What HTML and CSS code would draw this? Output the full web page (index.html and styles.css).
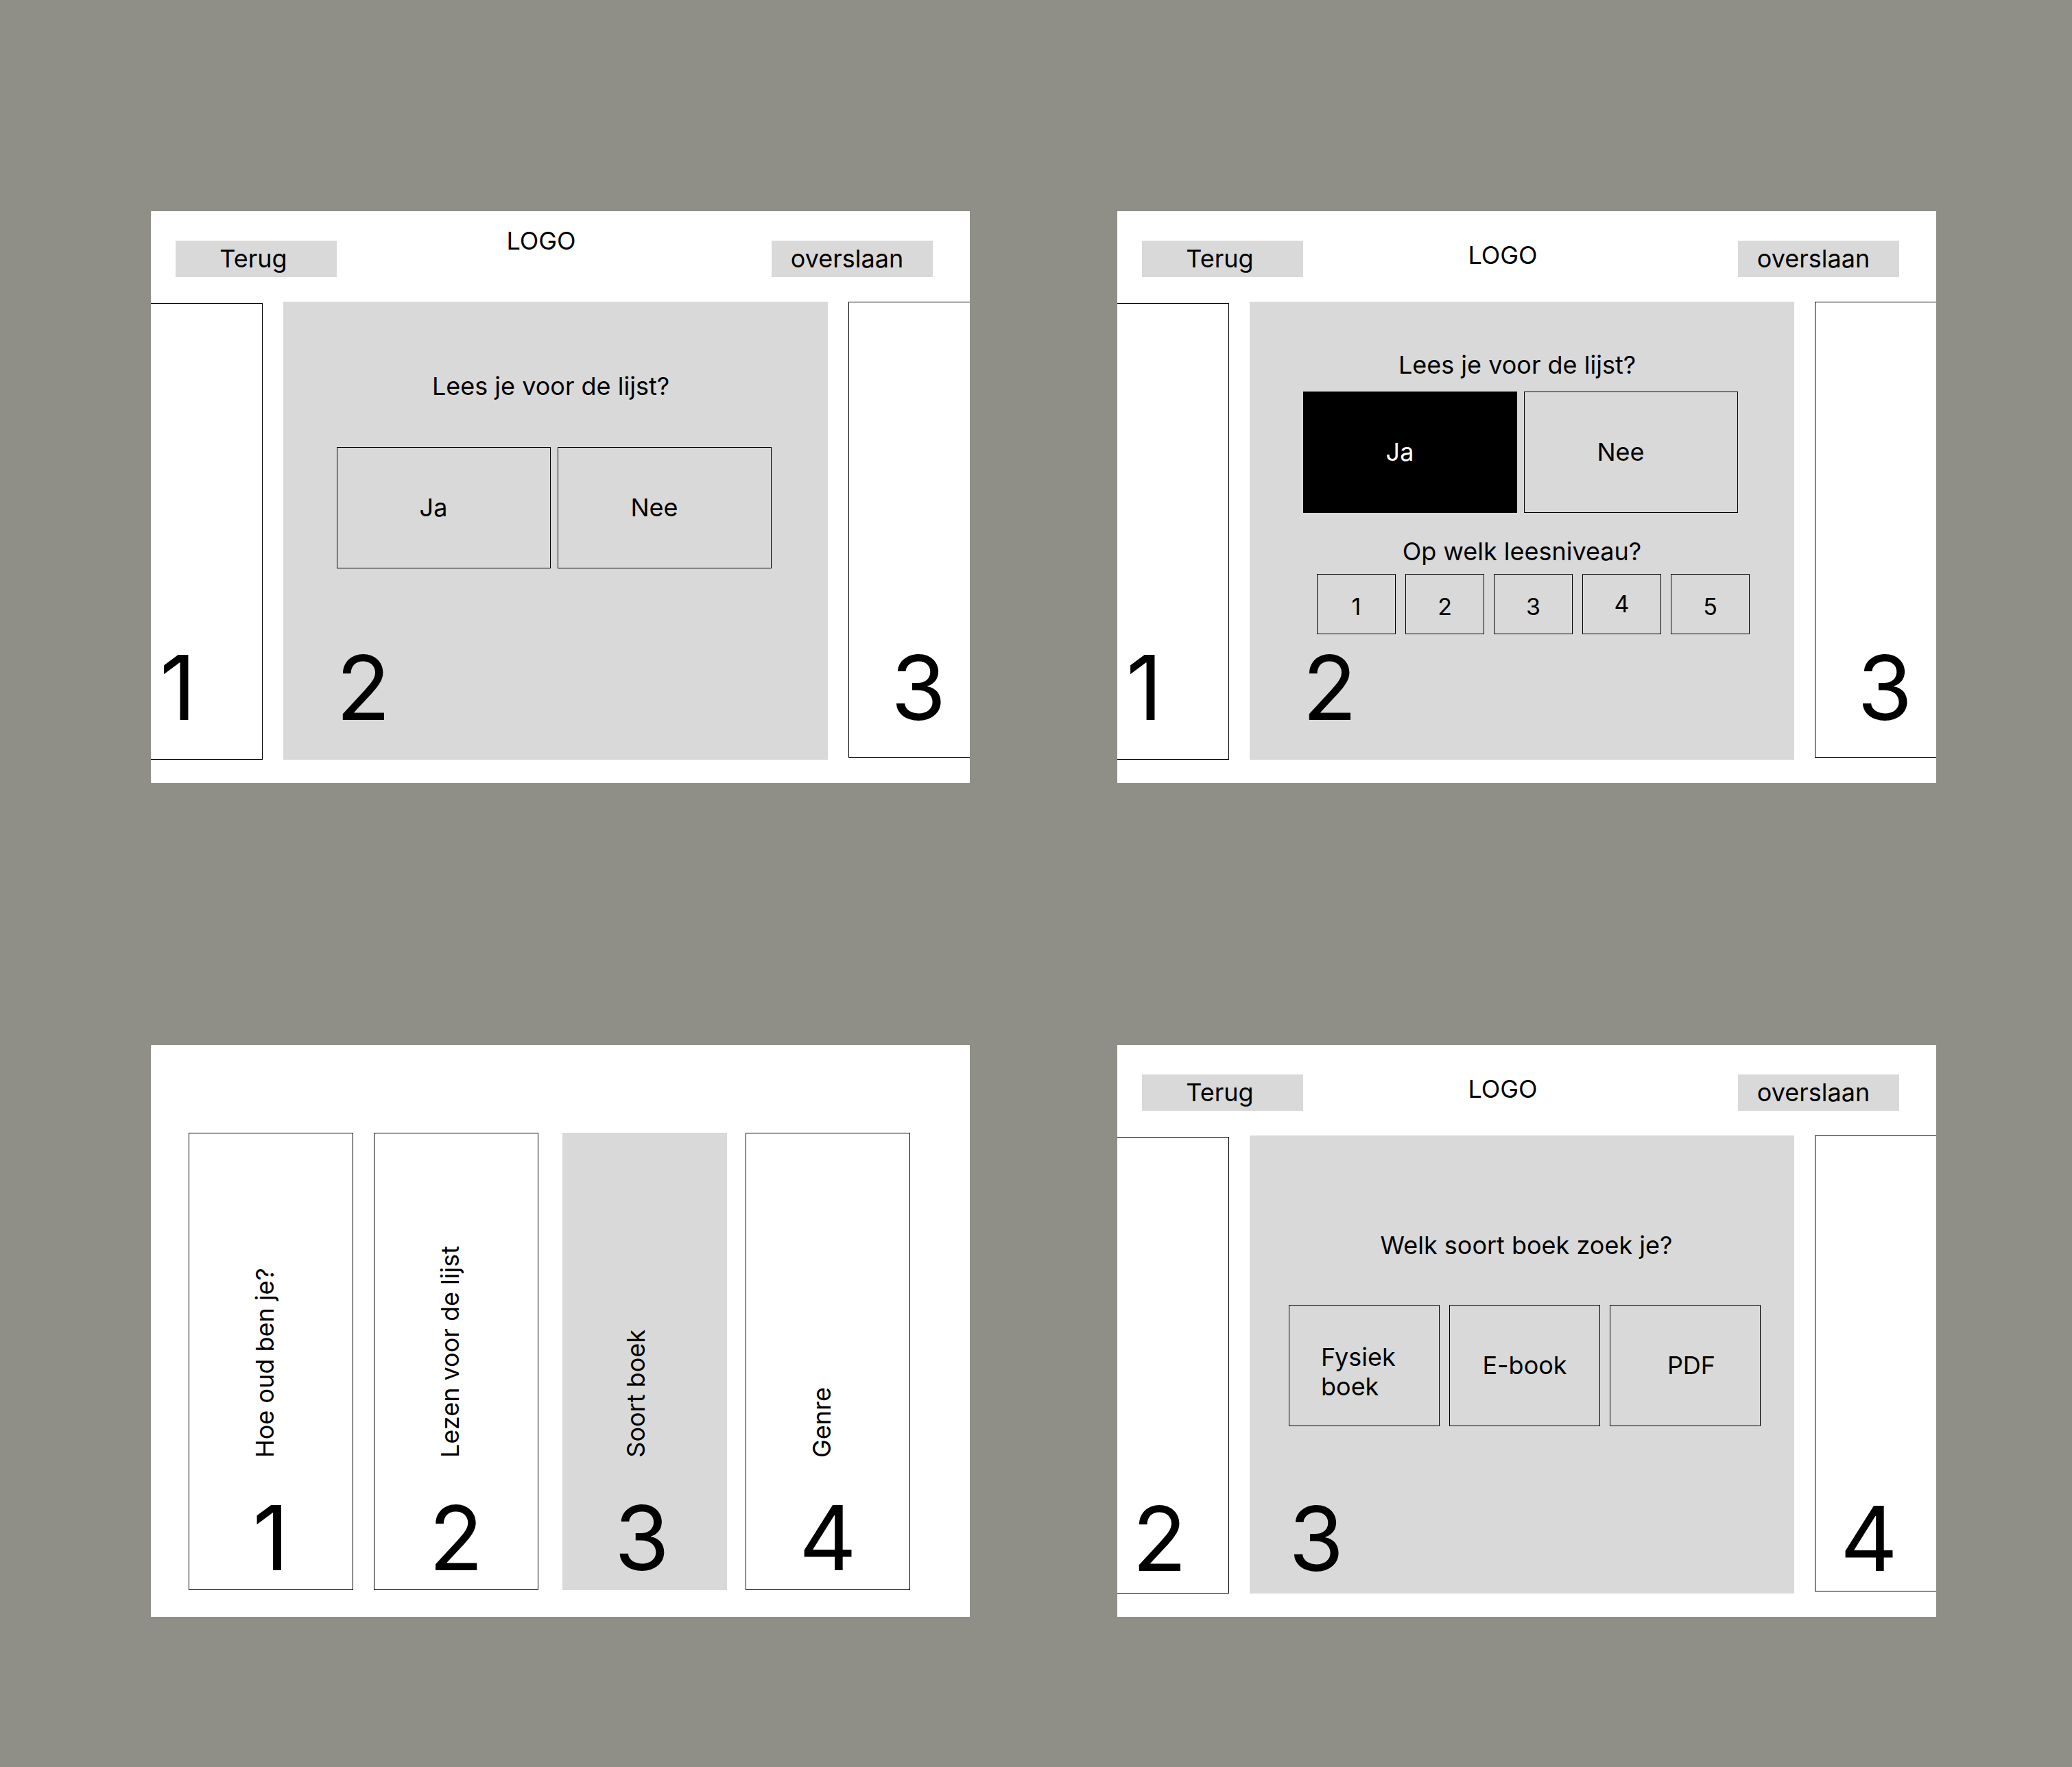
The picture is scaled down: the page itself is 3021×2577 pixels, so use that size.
FILE: index.html
```html
<!DOCTYPE html>
<html lang="nl">
<head>
<meta charset="utf-8">
<title>Wireframes boekkeuze</title>
<link rel="stylesheet" href="styles.css">
</head>
<body>
<main class="board">

  <section class="frame">
    <header class="topbar">
      <div class="navbtn">Terug</div>
      <div class="logo logo--high">LOGO</div>
      <div class="navbtn navbtn--skip">overslaan</div>
    </header>
    <div class="stage">
      <div class="side side--left"><span class="num pad-13">1</span></div>
      <div class="card card--intro">
        <p class="question">Lees je voor de lijst?</p>
        <div class="choices">
          <div class="choice">Ja</div>
          <div class="choice">Nee</div>
        </div>
        <span class="num pad-77">2</span>
      </div>
      <div class="side side--right"><span class="num pad-61">3</span></div>
    </div>
  </section>

  <section class="frame">
    <header class="topbar">
      <div class="navbtn">Terug</div>
      <div class="logo">LOGO</div>
      <div class="navbtn navbtn--skip">overslaan</div>
    </header>
    <div class="stage">
      <div class="side side--left"><span class="num pad-13">1</span></div>
      <div class="card card--level">
        <p class="question">Lees je voor de lijst?</p>
        <div class="choices">
          <div class="choice choice--selected">Ja</div>
          <div class="choice">Nee</div>
        </div>
        <p class="question question--sub">Op welk leesniveau?</p>
        <div class="levels">
          <div class="level">1</div>
          <div class="level">2</div>
          <div class="level">3</div>
          <div class="level level--raised">4</div>
          <div class="level">5</div>
        </div>
        <span class="num pad-77">2</span>
      </div>
      <div class="side side--right"><span class="num pad-61">3</span></div>
    </div>
  </section>

  <section class="frame frame--overview">
    <div class="steps">
      <div class="step">
        <span class="step-label">Hoe oud ben je?</span>
        <span class="num">1</span>
      </div>
      <div class="step step--second">
        <span class="step-label">Lezen voor de lijst</span>
        <span class="num">2</span>
      </div>
      <div class="step step--third step--active">
        <span class="step-label">Soort boek</span>
        <span class="num">3</span>
      </div>
      <div class="step step--fourth">
        <span class="step-label">Genre</span>
        <span class="num">4</span>
      </div>
    </div>
  </section>

  <section class="frame frame--low">
    <header class="topbar">
      <div class="navbtn">Terug</div>
      <div class="logo">LOGO</div>
      <div class="navbtn navbtn--skip">overslaan</div>
    </header>
    <div class="stage">
      <div class="side side--left"><span class="num pad-22">2</span></div>
      <div class="card card--type">
        <p class="question question--right">Welk soort boek zoek je?</p>
        <div class="options">
          <div class="option option--left">Fysiek boek</div>
          <div class="option">E-book</div>
          <div class="option option--shift">PDF</div>
        </div>
        <span class="num pad-57">3</span>
      </div>
      <div class="side side--right"><span class="num pad-36">4</span></div>
    </div>
  </section>

</main>
</body>
</html>
```

FILE: styles.css
```css
* {
  box-sizing: border-box;
  margin: 0;
  padding: 0;
}

html,
body {
  background: #8f8f87;
}

body {
  width: 3021px;
  height: 2577px;
  overflow: hidden;
  font-family: Inter, "Noto Sans", "Liberation Sans", sans-serif;
  color: #000;
}

.board {
  display: grid;
  grid-template-columns: 1194px 1194px;
  grid-auto-rows: 834px;
  column-gap: 215px;
  row-gap: 382px;
  padding: 308px 0 0 220px;
}

.frame {
  background: #fff;
  overflow: hidden;
  display: flex;
  flex-direction: column;
}

/* top bar */
.topbar {
  height: 132px;
  flex: none;
  display: grid;
  grid-template-columns: 235px 1fr 235px;
  align-items: start;
  padding: 43px 54px 0 36px;
}

.navbtn {
  height: 53px;
  background: #d9d9d9;
  font-size: 36px;
  line-height: 53px;
  text-align: center;
  padding-right: 8px;
}

.navbtn--skip {
  padding-right: 15px;
}

.logo {
  font-size: 36px;
  line-height: 1.2;
  text-align: center;
  padding-right: 52px;
}

.logo--high {
  margin-top: -21px;
  padding-right: 38px;
}

/* three-panel stage */
.stage {
  display: flex;
  align-items: flex-start;
  gap: 30px;
}

.side {
  display: flex;
  flex-direction: column;
  justify-content: flex-end;
  border: 1px solid #000;
  background: #fff;
  flex: none;
}

.side--left {
  width: 163px;
  height: 666px;
  margin-top: 2px;
  border-left: none;
}

.side--right {
  width: 177px;
  height: 665px;
  border-right: none;
}

.card {
  width: 794px;
  height: 668px;
  flex: none;
  background: #d9d9d9;
  display: flex;
  flex-direction: column;
}

.num {
  display: block;
  font-size: 130px;
  line-height: 130px;
  margin-top: auto;
}

.side--left .num { padding-bottom: 39px; }
.card .num { padding-bottom: 40px; }
.side--right .num { padding-bottom: 36px; }

.frame--low .side--left .num { padding-bottom: 14px; }
.frame--low .card .num { padding-bottom: 15px; }
.frame--low .side--right .num { padding-bottom: 11px; }

.pad-13 { padding-left: 13px; }
.pad-22 { padding-left: 22px; }
.pad-36 { padding-left: 36px; }
.pad-57 { padding-left: 57px; }
.pad-61 { padding-left: 61px; }
.pad-77 { padding-left: 77px; }

/* questions */
.question {
  font-size: 36px;
  line-height: 1.2;
  text-align: center;
  padding-right: 14px;
}

.question--sub {
  padding-right: 0;
  margin-top: 35px;
}

.question--right {
  padding-right: 0;
  padding-left: 13px;
}

.choices {
  display: flex;
  gap: 10px;
  margin-left: 78px;
}

.choice {
  width: 312px;
  height: 177px;
  border: 1px solid #000;
  display: flex;
  align-items: center;
  justify-content: center;
  padding-right: 30px;
  font-size: 36px;
  line-height: 1.2;
}

.choice--selected {
  background: #000;
  color: #fff;
}

.card--intro { padding-top: 102px; }
.card--intro .choices { margin-top: 67px; }

.card--level { padding-top: 71px; }
.card--level .choices { margin-top: 17px; }

.levels {
  display: flex;
  gap: 14px;
  margin: 11px 0 0 98px;
}

.level {
  width: 115px;
  height: 88px;
  border: 1px solid #000;
  display: flex;
  align-items: center;
  justify-content: center;
  padding-top: 8px;
  font-size: 34px;
  line-height: 1.2;
}

.level--raised {
  padding-top: 0;
}

.card--type { padding-top: 139px; }

.options {
  display: flex;
  gap: 14px;
  margin: 65px 0 0 57px;
}

.option {
  width: 220px;
  height: 177px;
  border: 1px solid #000;
  display: flex;
  align-items: center;
  justify-content: center;
  text-align: center;
  font-size: 36px;
  line-height: 43px;
}

.option--left {
  justify-content: flex-start;
  text-align: left;
  padding: 18px 30px 0 46px;
}

.option--shift {
  padding-left: 18px;
}

/* overview frame */
.frame--overview {
  padding: 128px 0 0 55px;
}

.steps {
  display: flex;
}

.step {
  width: 240px;
  height: 667px;
  flex: none;
  border: 1px solid #000;
  display: flex;
  flex-direction: column;
  justify-content: flex-end;
  padding-bottom: 10px;
}

.step--second { margin-left: 30px; }
.step--third { margin-left: 35px; }
.step--fourth { margin-left: 27px; }

.step--active {
  background: #d9d9d9;
  border-color: #d9d9d9;
}

.step-label {
  writing-mode: vertical-rl;
  transform: rotate(180deg);
  white-space: nowrap;
  font-size: 36px;
  line-height: 1.2;
  align-self: flex-start;
  margin: 0 0 52px 89px;
}

.step--third .step-label {
  margin-left: 85px;
}

.step .num {
  text-align: center;
  padding-bottom: 0;
  margin-top: 0;
}

.step--third .num {
  padding-right: 8px;
}
```
